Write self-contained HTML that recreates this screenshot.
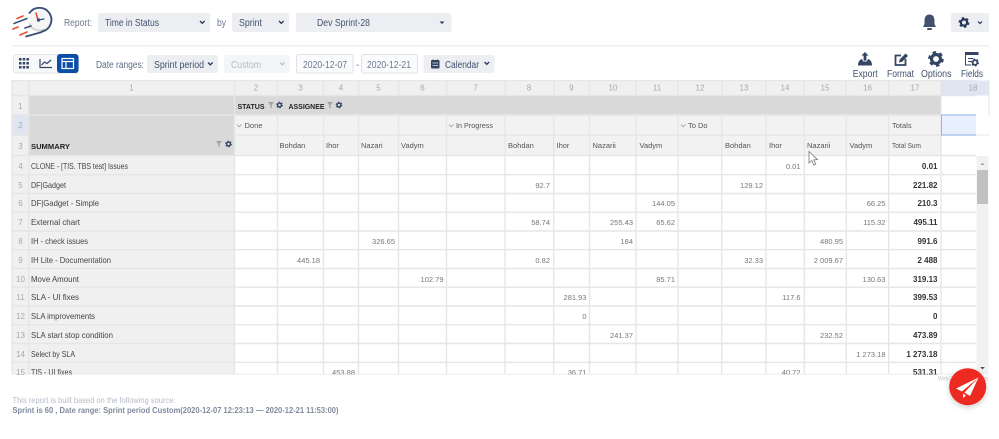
<!DOCTYPE html>
<html><head><meta charset="utf-8"><style>
html,body{margin:0;padding:0;background:#fff;width:999px;height:439px;overflow:hidden}
svg{display:block;font-family:"Liberation Sans",sans-serif;filter:blur(.3px)}
.h{font-size:8px;fill:#a8a8a8;text-anchor:middle}
.n{font-size:7.5px;fill:#777;text-anchor:end}
.b{font-size:8px;fill:#333;text-anchor:end;font-weight:bold}
.s{font-size:8.5px;fill:#444}
.c{font-size:7.5px;fill:#555}
.t{font-size:10px;fill:#42526e}
.i{font-size:10px;fill:#42526e}
.k{font-size:7.5px;fill:#222;font-weight:bold}
</style></head><body>
<svg width="999" height="439" viewBox="0 0 999 439" xmlns="http://www.w3.org/2000/svg">
<defs>
<g id="gear"><circle r="3.1" fill="none" stroke="currentColor" stroke-width="2.2"/><circle r="4.6" fill="none" stroke="currentColor" stroke-width="1.6" stroke-dasharray="2.4 2.4"/></g>
<g id="fl"><path d="M0 0H6L3.7 3V6.5L2.3 5.5V3Z" fill="#a3a3a3"/></g>
<clipPath id="tb"><rect x="0" y="80" width="976" height="294.5"/></clipPath>
<clipPath id="wm"><rect x="930" y="370" width="58" height="15"/></clipPath>
<filter id="sh" x="-30%" y="-30%" width="160%" height="160%"><feDropShadow dx="0" dy="2" stdDeviation="3" flood-color="#000" flood-opacity=".2"/></filter>
</defs>

<!-- logo -->
<g fill="none" stroke-linecap="round">
<circle cx="39.500" cy="20" r="10.500" fill="#f5f5f5"/>
<path d="M29.500 24A10.500 10.500 0 0 0 44 29.500" stroke="#d5d5d5" stroke-width="2"/>
<path d="M29.500 13A12 12 0 1 1 42 31.500" stroke="#3d5079" stroke-width="1.900"/>
<path d="M26 36.500L42 32M25 28L31 26" stroke="#3d5079" stroke-width="1.700"/>
<path d="M36 13L38 20" stroke="#e8432e" stroke-width="1.500"/>
<path d="M38 20L44 19" stroke="#3d5079" stroke-width="1.300"/>
<path d="M17 18.500L23 16M13 29L18 27M20 35L27 32" stroke="#e8532e" stroke-width="1.700"/>
<path d="M14 23.500L27 18.500" stroke="#3d5079" stroke-width="1.500"/>
</g>
<circle cx="38.500" cy="20" r="1.700" fill="#3d5079"/>

<!-- top bar -->
<text x="64" y="26" class="t" style="fill:#6b778c" textLength="28" lengthAdjust="spacingAndGlyphs">Report:</text>
<rect x="98" y="13" width="112" height="19" rx="2" fill="#eceef2"/>
<text x="105" y="26" class="t" textLength="54" lengthAdjust="spacingAndGlyphs">Time in Status</text>
<path d="M200 21l2.300 2.300 2.300-2.300" fill="none" stroke="#253858" stroke-width="1.300"/>
<text x="217" y="26" class="t" style="fill:#6b778c" textLength="9" lengthAdjust="spacingAndGlyphs">by</text>
<rect x="232" y="13" width="57" height="19" rx="2" fill="#eceef2"/>
<text x="239" y="26" class="t" textLength="23" lengthAdjust="spacingAndGlyphs">Sprint</text>
<path d="M279 21l2.300 2.300 2.300-2.300" fill="none" stroke="#253858" stroke-width="1.300"/>
<rect x="296" y="13" width="155.500" height="19" rx="2" fill="#eceef2"/>
<text x="317" y="26" class="t" textLength="53" lengthAdjust="spacingAndGlyphs">Dev Sprint-28</text>
<path d="M439.500 21.500h5l-2.500 2.500z" fill="#253858"/>

<!-- bell -->
<path d="M929.500 14.500c-3.500 0-5 2.800-5 6v3.500l-1.500 3h13l-1.500-3v-3.500c0-3.200-1.500-6-5-6z" fill="#42526e"/>
<rect x="927" y="28" width="5" height="2" rx="1" fill="#42526e"/>
<rect x="951" y="13" width="38" height="19" rx="2" fill="#eceef2"/>
<use href="#gear" x="964" y="22.500" style="color:#253858"/>
<path d="M978 21.500l2 2 2-2" fill="none" stroke="#253858" stroke-width="1.200"/>

<rect x="12" y="45" width="977" height="1.500" fill="#eeeeee"/>

<!-- view toggle -->
<rect x="13.500" y="54.500" width="65" height="18.500" rx="3" fill="#f7f8f9" stroke="#e2e4e9"/>
<g fill="#344563">
<rect x="19" y="58" width="2.500" height="2.500"/><rect x="22.700" y="58" width="2.500" height="2.500"/><rect x="26.400" y="58" width="2.500" height="2.500"/>
<rect x="19" y="62" width="2.500" height="2.500"/><rect x="22.700" y="62" width="2.500" height="2.500"/><rect x="26.400" y="62" width="2.500" height="2.500"/>
<rect x="19" y="66" width="2.500" height="2.500"/><rect x="22.700" y="66" width="2.500" height="2.500"/><rect x="26.400" y="66" width="2.500" height="2.500"/>
</g>
<path d="M40 59v8.500h12M41.500 65l3-3 2.500 1.500 4-3.500" fill="none" stroke="#344563" stroke-width="1.200"/>
<rect x="57" y="54" width="21.500" height="19" rx="3" fill="#0a4ea8"/>
<rect x="62" y="58.500" width="11.500" height="10" fill="none" stroke="#fff" stroke-width="1.200"/>
<path d="M62 61.500h11.500M66 61.500v7" stroke="#fff" stroke-width="1.200"/>

<text x="96" y="68" class="t" style="fill:#5e6c84" textLength="48" lengthAdjust="spacingAndGlyphs">Date ranges:</text>
<rect x="147" y="55" width="71" height="18" rx="2" fill="#eceef2"/>
<text x="154" y="68" class="t" textLength="50" lengthAdjust="spacingAndGlyphs">Sprint period</text>
<path d="M208 62.500l2.300 2.300 2.300-2.300" fill="none" stroke="#253858" stroke-width="1.300"/>
<rect x="224" y="55" width="66" height="18" rx="2" fill="#f4f5f7"/>
<text x="231" y="68" class="t" style="fill:#b3bac5" textLength="30" lengthAdjust="spacingAndGlyphs">Custom</text>
<path d="M280 62.500l2.300 2.300 2.300-2.300" fill="none" stroke="#b3bac5" stroke-width="1.200"/>
<rect x="296.500" y="54.500" width="56.500" height="18.500" rx="2" fill="#fafbfc" stroke="#dfe1e6"/>
<text x="303" y="68" class="t" style="fill:#6b778c" textLength="44" lengthAdjust="spacingAndGlyphs">2020-12-07</text>
<text x="356" y="68" class="t" style="fill:#6b778c">-</text>
<rect x="361.500" y="54.500" width="56" height="18.500" rx="2" fill="#fafbfc" stroke="#dfe1e6"/>
<text x="367" y="68" class="t" style="fill:#6b778c" textLength="44" lengthAdjust="spacingAndGlyphs">2020-12-21</text>
<rect x="423.500" y="55" width="71" height="18" rx="2" fill="#eceef2"/>
<rect x="431" y="60" width="8.500" height="8.500" rx="1" fill="#344563"/>
<path d="M433 61.500v-2M437.500 61.500v-2" stroke="#344563" stroke-width="1"/>
<path d="M432.500 63h5.500M432.500 65.500h5.500" stroke="#dfe1e6" stroke-width=".8"/>
<text x="445" y="68" class="t" textLength="34" lengthAdjust="spacingAndGlyphs">Calendar</text>
<path d="M484.500 62l2.300 2.300 2.300-2.300" fill="none" stroke="#253858" stroke-width="1.300"/>

<!-- right tools -->
<path d="M858 65.500q0-5.500 4-6.500l1.200 2.500h3.600l1.200-2.500q4 1 4 6.500z" fill="#344563"/>
<path d="M865 52l-3.500 3.600h2.100v5h2.800v-5h2.100z" fill="#344563"/>
<path d="M901 55.500h-5.500v9.500h10v-6" fill="none" stroke="#344563" stroke-width="1.800"/>
<path d="M899 62.500l.6-3 6-6 2.400 2.400-6 6z" fill="#344563"/>
<use href="#gear" style="color:#344563" transform="translate(936 59) scale(1.450)"/>
<rect x="965" y="52" width="13.500" height="3" fill="#344563"/>
<path d="M965.500 55v10h5.500M968 58.500h5M968 61.500h3" fill="none" stroke="#344563" stroke-width="1"/>
<use href="#gear" style="color:#344563" transform="translate(975 62.500) scale(.75)"/>
<text x="852.700" y="77" class="i" textLength="25" lengthAdjust="spacingAndGlyphs">Export</text>
<text x="887" y="77" class="i" textLength="27" lengthAdjust="spacingAndGlyphs">Format</text>
<text x="921" y="77" class="i" textLength="30.500" lengthAdjust="spacingAndGlyphs">Options</text>
<text x="961" y="77" class="i" textLength="22" lengthAdjust="spacingAndGlyphs">Fields</text>

<!-- table backgrounds -->
<g clip-path="url(#tb)">
<rect x="12" y="80" width="977" height="295" fill="#fff"/>
<rect x="12" y="80.500" width="929" height="15" fill="#f0f0f0"/>
<rect x="941" y="80.500" width="48" height="15" fill="#dfe6f1"/>
<rect x="12" y="95.500" width="16.700" height="279" fill="#f0f0f0"/>
<rect x="12" y="115" width="16.700" height="20" fill="#dfe6f1"/>
<rect x="28.700" y="156" width="205.800" height="219" fill="#f0f0f0"/>
<rect x="234.500" y="115" width="706.500" height="40.500" fill="#f2f2f2"/>
<rect x="28.700" y="96" width="912.300" height="19" fill="#d9d9d9"/>
<rect x="28.700" y="96" width="205.800" height="60" fill="#d9d9d9"/>
<rect x="941" y="115" width="48" height="20" fill="#e9f0fd"/>
<g stroke="#e6e6e6" stroke-width="1.400" fill="none">
<path d="M12 80.500H989M12 95.500H989"/>
<path d="M12 115H941M234.500 135H976M12 135H28.700M12 155.500H976"/>
<path d="M12 174.700H976M12 193.500H976M12 212.200H976M12 231H976M12 249.700H976M12 268.500H976M12 287.200H976M12 306H976M12 324.700H976M12 343.500H976M12 362.300H976M12 374.500H976"/>
<path d="M12 80V375M28.700 80V375M234.500 80V375M277.500 80V96M277.500 115V375M323.500 80V96M323.500 115V375M358.500 80V96M358.500 115V375M398.500 80V96M398.500 115V375M446.500 80V96M446.500 115V375M505 80V96M505 115V375M553.700 80V96M553.700 115V375M589.500 80V96M589.500 115V375M636 80V96M636 115V375M678 80V96M678 115V375M721.700 80V96M721.700 115V375M766 80V96M766 115V375M804.300 80V96M804.300 115V375M846.300 80V96M846.300 115V375M888.700 80V96M888.700 115V375M941 80V375"/>
</g>
<rect x="941.500" y="115" width="47.500" height="20" fill="none" stroke="#8fb3ee" stroke-width="1"/>
</g>
<path d="M941 80.500H989V95.500H941" fill="#dfe6f1" stroke="none"/>
<path d="M989 80V115M976 135H989" stroke="#e6e6e6" stroke-width="1" fill="none"/>

<!-- col headers -->
<text class="h" x="131.500" y="90.500">1</text><text class="h" x="256" y="90.500">2</text><text class="h" x="300.500" y="90.500">3</text><text class="h" x="341" y="90.500">4</text><text class="h" x="378.500" y="90.500">5</text><text class="h" x="422.500" y="90.500">6</text><text class="h" x="475.500" y="90.500">7</text><text class="h" x="529" y="90.500">8</text><text class="h" x="571.500" y="90.500">9</text><text class="h" x="613" y="90.500">10</text><text class="h" x="657" y="90.500">11</text><text class="h" x="700" y="90.500">12</text><text class="h" x="744" y="90.500">13</text><text class="h" x="785" y="90.500">14</text><text class="h" x="825" y="90.500">15</text><text class="h" x="867.500" y="90.500">16</text><text class="h" x="915" y="90.500">17</text><text class="h" x="973" y="90.500">18</text>

<!-- row headers -->
<text class="h" x="20.500" y="109">1</text><text class="h" x="20.500" y="128">2</text><text class="h" x="20.500" y="149">3</text><text class="h" x="20.500" y="169">4</text><text class="h" x="20.500" y="188">5</text><text class="h" x="20.500" y="206">6</text><text class="h" x="20.500" y="225">7</text><text class="h" x="20.500" y="244">8</text><text class="h" x="20.500" y="263">9</text><text class="h" x="20.500" y="282">10</text><text class="h" x="20.500" y="300">11</text><text class="h" x="20.500" y="319">12</text><text class="h" x="20.500" y="338">13</text><text class="h" x="20.500" y="357">14</text><text class="h" x="20.500" y="375">15</text>

<!-- pivot headers -->
<text class="k" x="237.500" y="109" textLength="27" lengthAdjust="spacingAndGlyphs">STATUS</text>
<use href="#fl" x="268" y="102"/>
<use href="#gear" style="color:#344563" transform="translate(279.500 105) scale(.62)"/>
<text class="k" x="288.500" y="109" textLength="36" lengthAdjust="spacingAndGlyphs">ASSIGNEE</text>
<use href="#fl" x="327" y="102"/>
<use href="#gear" style="color:#344563" transform="translate(339 105) scale(.62)"/>
<text class="k" x="31" y="149" textLength="39" lengthAdjust="spacingAndGlyphs">SUMMARY</text>
<use href="#fl" x="216" y="141"/>
<use href="#gear" style="color:#344563" transform="translate(228.500 144) scale(.62)"/>

<path d="M237 124.500l2.300 2.300 2.300-2.300" fill="none" stroke="#9a9a9a" stroke-width=".8"/>
<text class="c" x="244.500" y="128">Done</text>
<path d="M449 124.500l2.300 2.300 2.300-2.300" fill="none" stroke="#9a9a9a" stroke-width=".8"/>
<text class="c" x="456" y="128" textLength="37" lengthAdjust="spacingAndGlyphs">In Progress</text>
<path d="M681 124.500l2.300 2.300 2.300-2.300" fill="none" stroke="#9a9a9a" stroke-width=".8"/>
<text class="c" x="688" y="128">To Do</text>
<text class="c" x="892" y="128">Totals</text>

<text class="c" x="279.500" y="148">Bohdan</text><text class="c" x="326" y="148">Ihor</text><text class="c" x="361" y="148">Nazari</text><text class="c" x="401" y="148">Vadym</text>
<text class="c" x="508" y="148">Bohdan</text><text class="c" x="556.500" y="148">Ihor</text><text class="c" x="592.500" y="148">Nazarii</text><text class="c" x="639.500" y="148">Vadym</text>
<text class="c" x="725" y="148">Bohdan</text><text class="c" x="769" y="148">Ihor</text><text class="c" x="807" y="148">Nazarii</text><text class="c" x="849.500" y="148">Vadym</text><text class="c" x="892" y="148" textLength="29" lengthAdjust="spacingAndGlyphs">Total Sum</text>

<g clip-path="url(#tb)">
<!-- summary labels -->
<text class="s" x="31" y="169" textLength="97" lengthAdjust="spacingAndGlyphs">CLONE - [TIS. TBS test] Issues</text>
<text class="s" x="31" y="188" textLength="35" lengthAdjust="spacingAndGlyphs">DF|Gadget</text>
<text class="s" x="31" y="206" textLength="68" lengthAdjust="spacingAndGlyphs">DF|Gadget - Simple</text>
<text class="s" x="31" y="225" textLength="49" lengthAdjust="spacingAndGlyphs">External chart</text>
<text class="s" x="31" y="244" textLength="57" lengthAdjust="spacingAndGlyphs">IH - check issues</text>
<text class="s" x="31" y="263" textLength="80" lengthAdjust="spacingAndGlyphs">IH Lite - Documentation</text>
<text class="s" x="31" y="282" textLength="48" lengthAdjust="spacingAndGlyphs">Move Amount</text>
<text class="s" x="31" y="300" textLength="48" lengthAdjust="spacingAndGlyphs">SLA - UI fixes</text>
<text class="s" x="31" y="319" textLength="64" lengthAdjust="spacingAndGlyphs">SLA improvements</text>
<text class="s" x="31" y="338" textLength="82" lengthAdjust="spacingAndGlyphs">SLA start stop condition</text>
<text class="s" x="31" y="357" textLength="44" lengthAdjust="spacingAndGlyphs">Select by SLA</text>
<text class="s" x="31" y="375" textLength="41" lengthAdjust="spacingAndGlyphs">TIS - UI fixes</text>

<!-- values -->
<text class="n" x="800.500" y="169">0.01</text><text class="b" x="937.500" y="169">0.01</text>
<text class="n" x="550" y="188">92.7</text><text class="n" x="763" y="188">129.12</text><text class="b" x="937.500" y="188">221.82</text>
<text class="n" x="675" y="206">144.05</text><text class="n" x="885.500" y="206">66.25</text><text class="b" x="937.500" y="206">210.3</text>
<text class="n" x="550" y="225">58.74</text><text class="n" x="633" y="225">255.43</text><text class="n" x="675" y="225">65.62</text><text class="n" x="885.500" y="225">115.32</text><text class="b" x="937.500" y="225">495.11</text>
<text class="n" x="395" y="244">326.65</text><text class="n" x="633" y="244">184</text><text class="n" x="843" y="244">480.95</text><text class="b" x="937.500" y="244">991.6</text>
<text class="n" x="320" y="263">445.18</text><text class="n" x="550" y="263">0.82</text><text class="n" x="763" y="263">32.33</text><text class="n" x="843" y="263">2 009.67</text><text class="b" x="937.500" y="263">2 488</text>
<text class="n" x="443.500" y="282">102.79</text><text class="n" x="675" y="282">85.71</text><text class="n" x="885.500" y="282">130.63</text><text class="b" x="937.500" y="282">319.13</text>
<text class="n" x="586.500" y="300">281.93</text><text class="n" x="800.500" y="300">117.6</text><text class="b" x="937.500" y="300">399.53</text>
<text class="n" x="586.500" y="319">0</text><text class="b" x="937.500" y="319">0</text>
<text class="n" x="633" y="338">241.37</text><text class="n" x="843" y="338">232.52</text><text class="b" x="937.500" y="338">473.89</text>
<text class="n" x="885.500" y="357">1 273.18</text><text class="b" x="937.500" y="357">1 273.18</text>
<text class="n" x="355" y="375">453.88</text><text class="n" x="586.500" y="375">36.71</text><text class="n" x="800.500" y="375">40.72</text><text class="b" x="937.500" y="375">531.31</text>
</g>

<!-- scrollbar -->
<rect x="976.500" y="156" width="12" height="218.500" fill="#f1f1f1"/>
<rect x="977" y="170" width="11" height="34" fill="#c1c1c1"/>
<path d="M980.200 165l2.300-2.300 2.300 2.300z" fill="#a6a6a6"/>
<path d="M980.200 367l2.300 2.500 2.300-2.500z" fill="#505050"/>
<text x="938" y="380.500" clip-path="url(#wm)" style="font-size:6.500px;fill:#c4c4c4" textLength="50" lengthAdjust="spacingAndGlyphs">WebComponents.com</text>

<!-- cursor -->
<path d="M809 151.500l0 11.500 2.800-2.400 2 4.500 2-.9-2-4.300 3.800-.2z" fill="#fff" stroke="#777" stroke-width=".8"/>

<!-- footer -->
<text x="12.500" y="403" style="font-size:8.500px;fill:#b6bcc7" textLength="163" lengthAdjust="spacingAndGlyphs">This report is built based on the following source:</text>
<text x="12.500" y="413" style="font-size:8.500px;fill:#7f8a9d;font-weight:bold" textLength="326" lengthAdjust="spacingAndGlyphs">Sprint is 60 , Date range: Sprint period Custom(2020-12-07 12:23:13 — 2020-12-21 11:53:00)</text>

<!-- red button -->
<circle cx="967.700" cy="386.700" r="18.500" fill="#ec2a24" filter="url(#sh)"/>
<path d="M978.500 377.500L956 388.500l6 3zM978.500 377.500L964.500 392.500l5.500 3.500zM963 393.500v4.500l3-2.500z" fill="#fff"/>
</svg>
</body></html>
